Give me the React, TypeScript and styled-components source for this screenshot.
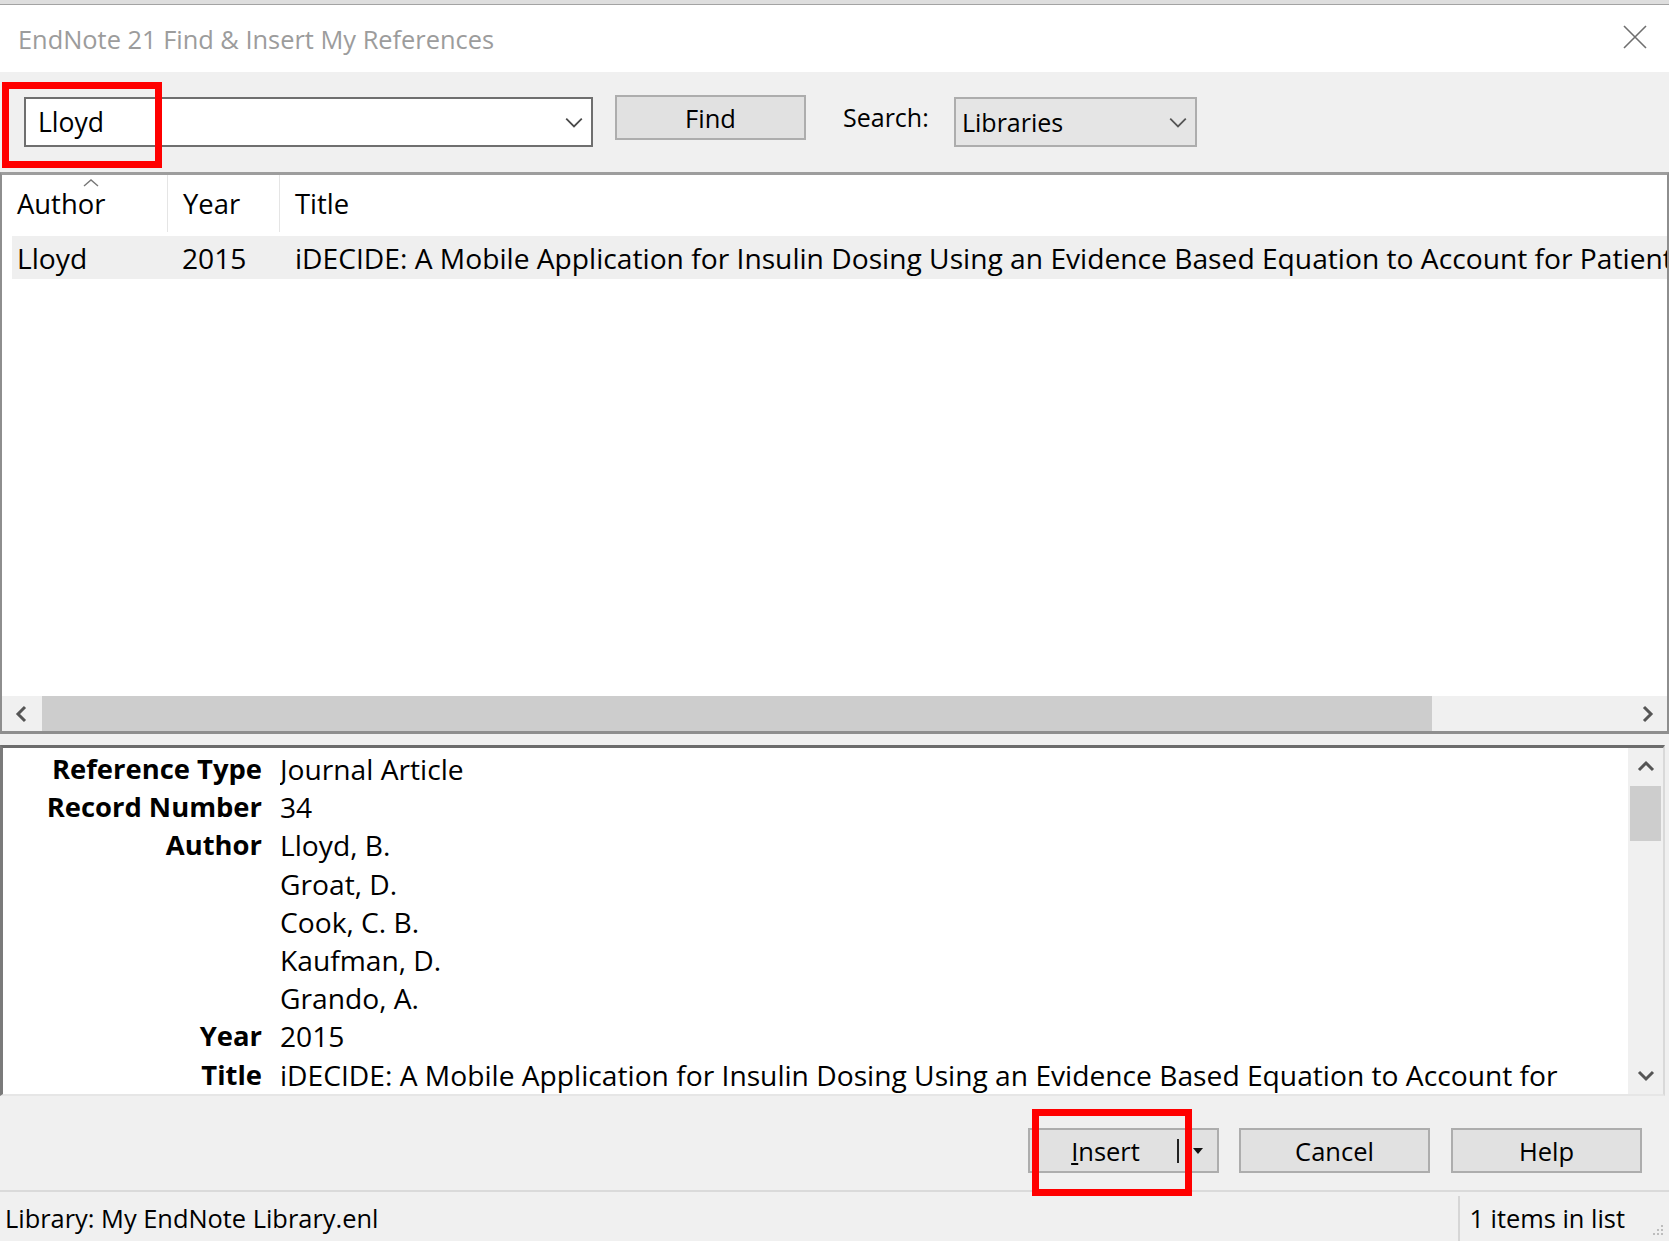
import React from 'react';
import styled, { createGlobalStyle } from 'styled-components';

const GlobalStyle = createGlobalStyle`
  html, body {
    margin: 0;
    padding: 0;
    background: #f0f0f0;
  }
  body {
    font-family: "Open Sans", "Noto Sans", "DejaVu Sans", sans-serif;
    color: #000;
  }
  * {
    box-sizing: border-box;
  }
`;

const Window = styled.div`
  width: 1669px;
  height: 1241px;
  display: flex;
  flex-direction: column;
  background: #f0f0f0;
  overflow: hidden;
  font-size: 25.5px;
`;

const BackStrip = styled.div`
  height: 5px;
  background: #dedede;
  border-bottom: 1px solid #a3a3a3;
`;

const TitleBar = styled.div`
  height: 67px;
  background: #fff;
  display: flex;
  align-items: center;
  justify-content: space-between;
  padding: 0 22px 0 18px;
`;

const TitleText = styled.div`
  color: #9c9c9c;
  font-size: 25.4px;
`;

const CloseButton = styled.div`
  width: 24px;
  height: 24px;
  margin-top: -3px;
  display: flex;
`;

const Toolbar = styled.div`
  height: 100px;
  display: flex;
  align-items: flex-start;
  padding: 25px 0 0 24px;
`;

const Highlight = styled.div<{ $l: number; $t: number; $w: number; $h: number }>`
  position: absolute;
  left: ${(p) => p.$l}px;
  top: ${(p) => p.$t}px;
  width: ${(p) => p.$w}px;
  height: ${(p) => p.$h}px;
  border: 7px solid #ff0000;
  pointer-events: none;
`;

const Combo = styled.div<{ $w: number; $gray?: boolean }>`
  position: relative;
  width: ${(p) => p.$w}px;
  height: 50px;
  background: ${(p) => (p.$gray ? '#e5e5e5' : '#fff')};
  border: 2px solid ${(p) => (p.$gray ? '#adadad' : '#6f6f6f')};
  display: flex;
  align-items: center;
  justify-content: space-between;
  padding: 0 7px 0 ${(p) => (p.$gray ? 6 : 12)}px;
  font-size: ${(p) => (p.$gray ? 25 : 26.5)}px;
`;

const Button = styled.div<{ $ml?: number; $mt?: number }>`
  position: relative;
  width: 191px;
  height: 45px;
  margin-left: ${(p) => p.$ml ?? 0}px;
  margin-top: ${(p) => p.$mt ?? 0}px;
  background: #e1e1e1;
  border: 2px solid #adadad;
  display: flex;
  align-items: center;
  justify-content: center;
  font-size: 25.5px;
`;

const Label = styled.div`
  width: 111px;
  margin-left: 37px;
  margin-top: -2px;
  height: 45px;
  line-height: 45px;
  font-size: 25px;
`;

const ListPanel = styled.div`
  flex: 1;
  display: flex;
  flex-direction: column;
  background: #fff;
  border-top: 3px solid #9d9d9d;
  border-left: 2px solid #8e8e8e;
  border-right: 2px solid #8e8e8e;
  border-bottom: 3px solid #8e8e8e;
  overflow: hidden;
`;

const HeaderRow = styled.div`
  position: relative;
  height: 57px;
  display: grid;
  grid-template-columns: 165px 112px 1fr;
  align-items: stretch;
  font-size: 27.4px;
`;

const HeaderCell = styled.div<{ $sep?: boolean }>`
  display: flex;
  align-items: center;
  padding-left: 15px;
  border-left: ${(p) => (p.$sep ? '1px solid #e5e5e5' : 'none')};
  position: relative;
`;

const SortCaret = styled.svg`
  position: absolute;
  left: 81px;
  top: 3px;
`;

const DataRow = styled.div`
  margin: 4px 0 0 10px;
  height: 43px;
  background: #efefef;
  display: grid;
  grid-template-columns: 155px 112px 1fr;
  align-items: center;
  white-space: nowrap;
  overflow: hidden;
  font-size: 28.2px;
`;

const Cell = styled.div<{ $pad: number }>`
  padding-left: ${(p) => p.$pad}px;
  overflow: hidden;
`;

const ListSpace = styled.div`
  flex: 1;
`;

const HScroll = styled.div`
  height: 35px;
  display: flex;
  background: #f0f0f0;
`;

const ScrollArrow = styled.div<{ $w: number; $h: number }>`
  width: ${(p) => p.$w}px;
  height: ${(p) => p.$h}px;
  display: flex;
  align-items: center;
  justify-content: center;
  flex-shrink: 0;
`;

const HThumb = styled.div`
  width: 1390px;
  background: #cdcdcd;
`;

const HTrack = styled.div`
  flex: 1;
`;

const Splitter = styled.div`
  height: 11px;
  flex-shrink: 0;
`;

const DetailPanel = styled.div`
  height: 351px;
  flex-shrink: 0;
  display: flex;
  margin-right: 4px;
  background: #fff;
  border-top: 3px solid #6c6c6c;
  border-left: 3px solid #7a7a7a;
  border-right: 2px solid #d9d9d9;
  border-bottom: 2px solid #e6e6e6;
`;

const DetailBody = styled.div`
  flex: 1;
  overflow: hidden;
  padding-top: 2px;
`;

const Field = styled.div`
  display: grid;
  grid-template-columns: 259px 1fr;
  column-gap: 18px;
  line-height: 38.2px;
  white-space: nowrap;
`;

const FieldName = styled.div`
  font-weight: 700;
  font-size: 27.4px;
  text-align: right;
`;

const FieldValue = styled.div`
  font-size: 28.2px;
  overflow: hidden;
`;

const VScroll = styled.div`
  width: 35px;
  display: flex;
  flex-direction: column;
  background: #f0f0f0;
`;

const VThumb = styled.div`
  height: 55px;
  margin: 0 2px;
  background: #cdcdcd;
`;

const VTrack = styled.div`
  flex: 1;
`;

const ButtonBar = styled.div`
  height: 94px;
  flex-shrink: 0;
  display: flex;
  justify-content: flex-end;
  align-items: flex-start;
  padding: 32px 27px 0 0;
`;

const SplitMain = styled.div`
  flex: 1;
  display: flex;
  align-items: center;
  justify-content: center;
  padding-left: 4px;
`;

const SplitBar = styled.div`
  width: 2px;
  height: 24px;
  background: #222;
`;

const SplitArrow = styled.div`
  width: 38px;
  display: flex;
  align-items: center;
  justify-content: center;
`;

const StatusBar = styled.div`
  height: 51px;
  flex-shrink: 0;
  border-top: 2px solid #dadada;
  display: flex;
  align-items: stretch;
  font-size: 25.4px;
`;

const StatusText = styled.div<{ $grow?: boolean }>`
  flex: ${(p) => (p.$grow ? 1 : 'none')};
  display: flex;
  align-items: center;
  padding-left: ${(p) => (p.$grow ? 5 : 9)}px;
  margin-top: 2px;
`;

const StatusSep = styled.div`
  width: 2px;
  margin-top: 4px;
  background: #d6d6d6;
`;

const Grip = styled.div`
  width: 44px;
  display: flex;
  align-items: flex-end;
  justify-content: flex-end;
  padding: 0 4px 4px 0;
`;

const Chevron = ({ dir, size = 18, color = '#4a4a4a', width = 1.6 }: { dir: 'down' | 'up' | 'left' | 'right'; size?: number; color?: string; width?: number }) => {
  const pts: Record<string, string> = {
    down: '2,6 9,13 16,6',
    up: '2,12 9,5 16,12',
    left: '12,2 5,9 12,16',
    right: '6,2 13,9 6,16',
  };
  return (
    <svg width={size} height={size} viewBox="0 0 18 18">
      <polyline points={pts[dir]} fill="none" stroke={color} strokeWidth={width} strokeLinejoin="miter" />
    </svg>
  );
};

const authors = ['Lloyd, B.', 'Groat, D.', 'Cook, C. B.', 'Kaufman, D.', 'Grando, A.'];
const title =
  'iDECIDE: A Mobile Application for Insulin Dosing Using an Evidence Based Equation to Account for Patient Variability';

const App = () => {
  const fields: [string, string][] = [
    ['Reference Type', 'Journal Article'],
    ['Record Number', '34'],
    ...authors.map((a, i): [string, string] => [i === 0 ? 'Author' : '', a]),
    ['Year', '2015'],
    ['Title', 'iDECIDE: A Mobile Application for Insulin Dosing Using an Evidence Based Equation to Account for'],
  ];

  return (
    <Window>
      <GlobalStyle />
      <BackStrip />
      <TitleBar>
        <TitleText>EndNote 21 Find &amp; Insert My References</TitleText>
        <CloseButton>
          <svg width="24" height="24" viewBox="0 0 24 24">
            <path d="M1 1 L23 23 M23 1 L1 23" stroke="#6f6f6f" strokeWidth="1.6" />
          </svg>
        </CloseButton>
      </TitleBar>

      <Toolbar>
        <Combo $w={569}>
          <span>Lloyd</span>
          <Chevron dir="down" size={20} />
          <Highlight $l={-24} $t={-17} $w={160} $h={86} />
        </Combo>
        <Button $ml={22} $mt={-2}>Find</Button>
        <Label>Search:</Label>
        <Combo $w={243} $gray>
          <span>Libraries</span>
          <Chevron dir="down" size={20} color="#555" />
        </Combo>
      </Toolbar>

      <ListPanel>
        <HeaderRow>
          <HeaderCell>
            <SortCaret width="16" height="10" viewBox="0 0 16 10">
              <polyline points="1,8 8,2 15,8" fill="none" stroke="#777" strokeWidth="1.4" />
            </SortCaret>
            Author
          </HeaderCell>
          <HeaderCell $sep>Year</HeaderCell>
          <HeaderCell $sep>Title</HeaderCell>
        </HeaderRow>
        <DataRow>
          <Cell $pad={5}>Lloyd</Cell>
          <Cell $pad={15}>2015</Cell>
          <Cell $pad={16}>{title}</Cell>
        </DataRow>
        <ListSpace />
        <HScroll>
          <ScrollArrow $w={40} $h={35}>
            <Chevron dir="left" size={18} color="#555" width={3} />
          </ScrollArrow>
          <HThumb />
          <HTrack />
          <ScrollArrow $w={40} $h={35}>
            <Chevron dir="right" size={18} color="#555" width={3} />
          </ScrollArrow>
        </HScroll>
      </ListPanel>

      <Splitter />

      <DetailPanel>
        <DetailBody>
          {fields.map(([name, value], i) => (
            <Field key={i}>
              <FieldName>{name}</FieldName>
              <FieldValue>{value}</FieldValue>
            </Field>
          ))}
        </DetailBody>
        <VScroll>
          <ScrollArrow $w={35} $h={38}>
            <Chevron dir="up" size={18} color="#555" width={3} />
          </ScrollArrow>
          <VThumb />
          <VTrack />
          <ScrollArrow $w={35} $h={38}>
            <Chevron dir="down" size={18} color="#555" width={3} />
          </ScrollArrow>
        </VScroll>
      </DetailPanel>

      <ButtonBar>
        <Button>
          <SplitMain>
            <span>
              <u>I</u>nsert
            </span>
          </SplitMain>
          <SplitBar />
          <SplitArrow>
            <svg width="12" height="8" viewBox="0 0 12 8">
              <polygon points="1,1 11,1 6,7" fill="#111" />
            </svg>
          </SplitArrow>
          <Highlight $l={2} $t={-21} $w={160} $h={87} />
        </Button>
        <Button $ml={20}>Cancel</Button>
        <Button $ml={21}>Help</Button>
      </ButtonBar>

      <StatusBar>
        <StatusText $grow>Library: My EndNote Library.enl</StatusText>
        <StatusSep />
        <StatusText>1 items in list</StatusText>
        <Grip>
          <svg width="14" height="14" viewBox="0 0 14 14">
            {[
              [11, 3], [7, 7], [11, 7], [3, 11], [7, 11], [11, 11],
            ].map(([x, y], i) => (
              <rect key={i} x={x - 1} y={y - 1} width="2" height="2" fill="#bdbdbd" />
            ))}
          </svg>
        </Grip>
      </StatusBar>
    </Window>
  );
};

export default App;
